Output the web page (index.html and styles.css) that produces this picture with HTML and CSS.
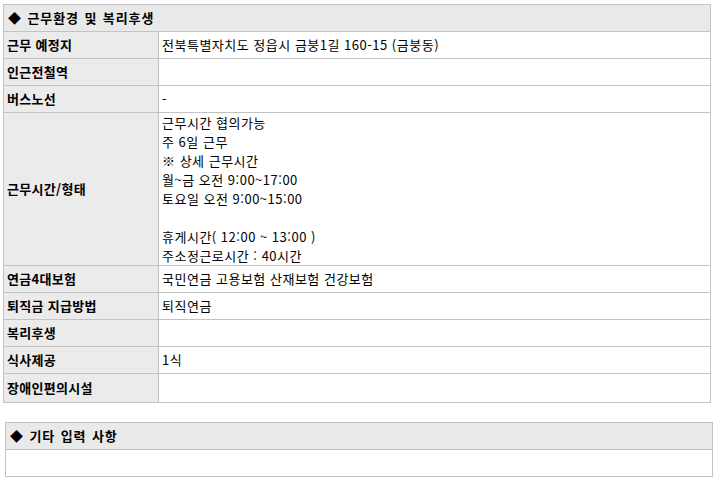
FILE: index.html
```html
<!DOCTYPE html>
<html lang="ko">
<head>
<meta charset="utf-8">
<link rel="stylesheet" href="styles.css">
</head>
<body>
<div class="page">
  <table class="info">
    <colgroup><col class="c-lbl"><col class="c-val"></colgroup>
    <tr><th class="sec" colspan="2">◆ 근무환경 및 복리후생</th></tr>
    <tr><th class="lbl">근무 예정지</th><td>전북특별자치도 정읍시 금붕1길 160-15 (금붕동)</td></tr>
    <tr><th class="lbl">인근전철역</th><td></td></tr>
    <tr><th class="lbl">버스노선</th><td>-</td></tr>
    <tr><th class="lbl">근무시간/형태</th><td class="multi">근무시간 협의가능<br>주 6일 근무<br>※ 상세 근무시간<br>월~금 오전 9:00~17:00<br>토요일 오전 9:00~15:00<br><br>휴게시간( 12:00 ~ 13:00 )<br>주소정근로시간 : 40시간</td></tr>
    <tr><th class="lbl">연금4대보험</th><td>국민연금 고용보험 산재보험 건강보험</td></tr>
    <tr><th class="lbl">퇴직금 지급방법</th><td>퇴직연금</td></tr>
    <tr><th class="lbl">복리후생</th><td></td></tr>
    <tr><th class="lbl">식사제공</th><td>1식</td></tr>
    <tr class="last"><th class="lbl">장애인편의시설</th><td></td></tr>
  </table>
  <table class="info etc">
    <tr><th class="sec">◆ 기타 입력 사항</th></tr>
    <tr><td></td></tr>
  </table>
</div>
</body>
</html>
```
FILE: styles.css
```css
html, body { margin: 0; padding: 0; background: #fff; }
body {
  font-family: "Noto Sans CJK KR", "Noto Sans", sans-serif;
  font-size: 13px;
  color: #000;
}
.page {
  padding: 4px 0 0 3px;
  display: flex;
  flex-direction: column;
  align-items: flex-start;
}
.info {
  border-collapse: collapse;
  width: 708px;
  table-layout: fixed;
}
.c-lbl { width: 155px; }
.info th, .info td {
  border: 1px solid #c2c2c2;
  height: 18px;
  padding: 4px 3px;
  line-height: 18px;
  text-align: left;
  vertical-align: middle;
  white-space: nowrap;
}
.info td {
  background: #fff;
  font-weight: normal;
  letter-spacing: 0.5px;
}
.info td.multi {
  padding: 0 3px;
  line-height: 19px;
}
.info .last th, .info .last td { height: 20px; }
.info .sec {
  background: #e9e9e9;
  font-weight: bold;
  letter-spacing: 0.9px;
  word-spacing: 1px;
  padding-left: 4px;
}
.info .lbl {
  background: #ebebeb;
  font-weight: bold;
  letter-spacing: 0.3px;
  padding-left: 3px;
}
.etc {
  margin: 19px 0 0 2px;
}
```
